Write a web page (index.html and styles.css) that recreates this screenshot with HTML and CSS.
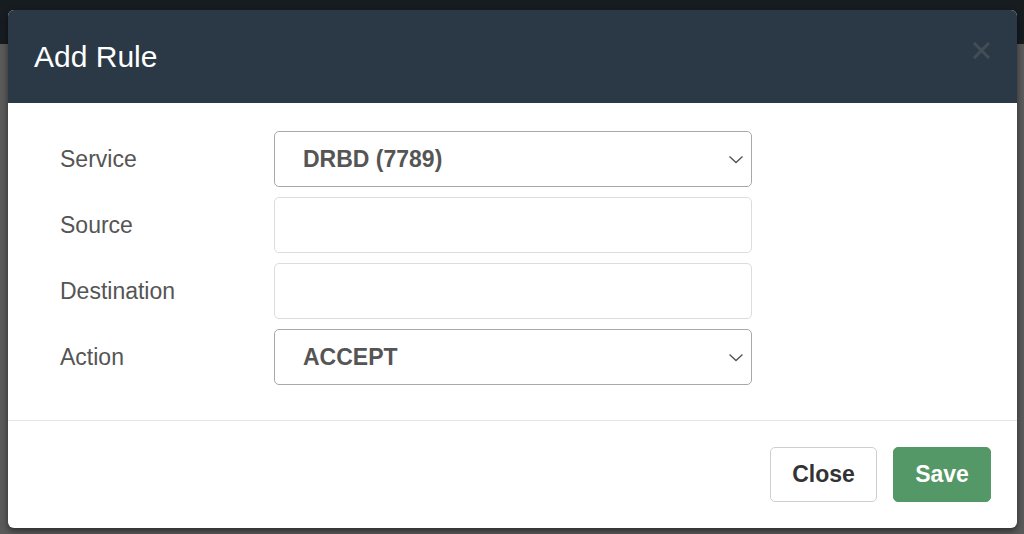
FILE: index.html
```
<!doctype html>
<html>
	<head>
		<title>Add Rule</title>
		<meta charset="utf-8" />
		<meta name="viewport" content="width=device-width, initial-scale=1" />
		<link rel="stylesheet" href="styles.css">
	</head>

	<body>

		<div id="rule_modal" class="modal">

			<div class="modal_header">
				<h1>Add Rule</h1>
				<div class="close_icon">
					<svg width="17" height="17" viewBox="0 0 17 17"><path d="M2 2 L15 15 M15 2 L2 15" stroke="#434d56" stroke-width="3" stroke-linecap="square" fill="none"/></svg>
				</div>
			</div>

			<div class="modal_body">

				<label class="field_label" for="service_select">Service</label>
				<div class="select_wrap">
					<select id="service_select" class="field field_select">
						<option>DRBD (7789)</option>
					</select>
					<svg class="chevron" width="16" height="9" viewBox="0 0 16 9"><path d="M1.5 1.5 L8 7.5 L14.5 1.5" stroke="#555" stroke-width="1.4" fill="none"/></svg>
				</div>

				<label class="field_label" for="source_input">Source</label>
				<input id="source_input" class="field field_input" type="text">

				<label class="field_label" for="destination_input">Destination</label>
				<input id="destination_input" class="field field_input" type="text">

				<label class="field_label" for="action_select">Action</label>
				<div class="select_wrap">
					<select id="action_select" class="field field_select">
						<option>ACCEPT</option>
					</select>
					<svg class="chevron" width="16" height="9" viewBox="0 0 16 9"><path d="M1.5 1.5 L8 7.5 L14.5 1.5" stroke="#555" stroke-width="1.4" fill="none"/></svg>
				</div>

			</div>

			<div class="modal_footer">
				<div id="close_button" class="button button_close">Close</div>
				<div id="save_button" class="button button_save">Save</div>
			</div>

		</div>

	</body>
</html>
```

FILE: styles.css
```
body {
	margin: 0;
	padding: 10px 7px 0 8px;
	height: 534px;
	box-sizing: border-box;
	overflow: hidden;
	background: linear-gradient(#171c21 0, #171c21 44px, #5a5a5a 44px);
	font-family: 'Liberation Sans', Arial, Helvetica, sans-serif;
}

.modal {
	background-color: #ffffff;
	border-radius: 6px;
	overflow: hidden;
	box-shadow: 0 3px 6px rgba(0, 0, 0, 0.5);
}

.modal_header {
	height: 93px;
	background-color: #2b3947;
	display: flex;
	align-items: center;
	justify-content: space-between;
	padding: 0 27px 0 26px;
	box-sizing: border-box;
}

h1 {
	margin: 0;
	color: #ffffff;
	font-size: 30px;
	font-weight: normal;
}

.close_icon {
	width: 17px;
	height: 17px;
	margin-top: -12px;
}

.close_icon svg {
	display: block;
}

.modal_body {
	display: grid;
	grid-template-columns: 214px 478px;
	grid-auto-rows: 56px;
	row-gap: 10px;
	padding: 28px 0 35px 52px;
	border-bottom: 1px solid #e5e5e5;
}

.field_label {
	display: flex;
	align-items: center;
	font-size: 23px;
	color: #555555;
}

.field {
	width: 100%;
	height: 56px;
	box-sizing: border-box;
	border-radius: 5px;
	background-color: #ffffff;
	margin: 0;
	font-family: inherit;
	outline: none;
}

.field_input {
	border: 1px solid #dcdcdc;
}

.select_wrap {
	position: relative;
}

.field_select {
	-webkit-appearance: none;
	appearance: none;
	border: 1px solid #a8a8a8;
	padding: 0 0 0 28px;
	font-size: 23px;
	font-weight: bold;
	color: #555555;
}

.chevron {
	position: absolute;
	right: 8px;
	top: 24px;
	pointer-events: none;
}

.modal_footer {
	display: flex;
	justify-content: flex-end;
	gap: 16px;
	padding: 26px 26px 26px 0;
}

.button {
	height: 55px;
	box-sizing: border-box;
	display: flex;
	align-items: center;
	justify-content: center;
	font-size: 23px;
	font-weight: bold;
	border-radius: 5px;
}

.button_close {
	width: 107px;
	border: 1px solid #cfcfcf;
	color: #333333;
	background-color: #ffffff;
}

.button_save {
	width: 98px;
	border: 1px solid #539866;
	color: #ffffff;
	background-color: #539866;
}
```
